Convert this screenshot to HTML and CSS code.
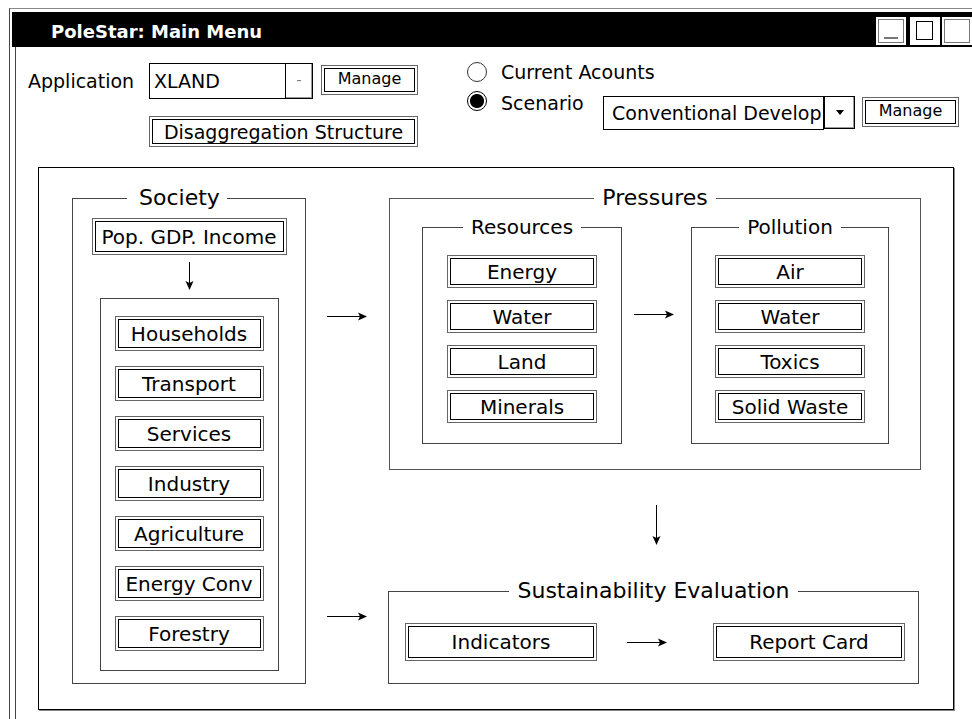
FILE: index.html
```html
<!DOCTYPE html>
<html lang="en">
<head>
  <meta charset="UTF-8" />
  <meta name="viewport" content="width=device-width, initial-scale=1.0"/>
  <title>PoleStar: Main Menu</title>
  <link rel="stylesheet" href="styles.css">
</head>
<body>
  <div class="window">
    <div class="titlebar">
      <span class="title">PoleStar: Main Menu</span>
      <div class="winbtns">
        <span class="winbtn win-min"><span class="winbtn-in"><span class="underscore"></span></span></span>
        <span class="winbtn win-max"><span class="winbtn-in"></span></span>
        <span class="winbtn win-close"><span class="winbtn-in"></span></span>
      </div>
    </div>

    <div class="main">
      <div class="toolbar">
        <div class="app">
          <div class="app-row">
            <span class="label">Application</span>
            <div class="combo app-combo">
              <span class="combo-text">XLAND</span>
              <span class="combo-btn dash">-</span>
            </div>
            <div class="btn manage"><span>Manage</span></div>
          </div>
          <div class="btn disagg"><span>Disaggregation Structure</span></div>
        </div>

        <div class="mode">
          <div class="radio-row">
            <span class="radio"></span>
            <span class="radio-label">Current Acounts</span>
          </div>
          <div class="radio-row scenario-row">
            <span class="radio checked"></span>
            <span class="radio-label scen-label">Scenario</span>
            <div class="combo scen-combo">
              <span class="combo-text">Conventional Develop</span>
            </div>
            <span class="drop-btn"></span>
            <div class="btn manage manage-scen"><span>Manage</span></div>
          </div>
        </div>
      </div>

      <div class="canvas">
        <fieldset class="group society">
          <legend>Society</legend>
          <div class="btn pop"><span>Pop. GDP. Income</span></div>
          <svg class="arrow-down small" width="9" height="28" viewBox="0 0 9 28">
            <path d="M4.5 0V21" stroke="#000" stroke-width="1"/>
            <path d="M0.5 19L4.5 28L8.5 19L4.5 21Z" fill="#000"/>
          </svg>
          <div class="sectors">
            <div class="btn sector"><span>Households</span></div>
            <div class="btn sector"><span>Transport</span></div>
            <div class="btn sector"><span>Services</span></div>
            <div class="btn sector"><span>Industry</span></div>
            <div class="btn sector"><span>Agriculture</span></div>
            <div class="btn sector"><span>Energy Conv</span></div>
            <div class="btn sector"><span>Forestry</span></div>
          </div>
        </fieldset>

        <div class="links">
          <svg class="arrow-right first" width="40" height="9" viewBox="0 0 40 9">
            <path d="M0 4.5H33" stroke="#000" stroke-width="1"/>
            <path d="M31 0.5L40 4.5L31 8.5L33 4.5Z" fill="#000"/>
          </svg>
          <svg class="arrow-right second" width="40" height="9" viewBox="0 0 40 9">
            <path d="M0 4.5H33" stroke="#000" stroke-width="1"/>
            <path d="M31 0.5L40 4.5L31 8.5L33 4.5Z" fill="#000"/>
          </svg>
        </div>

        <div class="flow">
          <fieldset class="group pressures">
            <legend>Pressures</legend>
            <div class="pressure-row">
              <fieldset class="group sub resources">
                <legend>Resources</legend>
                <div class="btn item"><span>Energy</span></div>
                <div class="btn item"><span>Water</span></div>
                <div class="btn item"><span>Land</span></div>
                <div class="btn item"><span>Minerals</span></div>
              </fieldset>
              <svg class="arrow-right mid" width="40" height="9" viewBox="0 0 40 9">
                <path d="M0 4.5H33" stroke="#000" stroke-width="1"/>
                <path d="M31 0.5L40 4.5L31 8.5L33 4.5Z" fill="#000"/>
              </svg>
              <fieldset class="group sub pollution">
                <legend>Pollution</legend>
                <div class="btn item"><span>Air</span></div>
                <div class="btn item"><span>Water</span></div>
                <div class="btn item"><span>Toxics</span></div>
                <div class="btn item"><span>Solid Waste</span></div>
              </fieldset>
            </div>
          </fieldset>

          <svg class="arrow-down big" width="9" height="40" viewBox="0 0 9 40">
            <path d="M4.5 0V33" stroke="#000" stroke-width="1"/>
            <path d="M0.5 31L4.5 40L8.5 31L4.5 33Z" fill="#000"/>
          </svg>

          <fieldset class="group sustain">
            <legend>Sustainability Evaluation</legend>
            <div class="sustain-row">
              <div class="btn eval"><span>Indicators</span></div>
              <svg class="arrow-right eval-arrow" width="40" height="9" viewBox="0 0 40 9">
                <path d="M0 4.5H33" stroke="#000" stroke-width="1"/>
                <path d="M31 0.5L40 4.5L31 8.5L33 4.5Z" fill="#000"/>
              </svg>
              <div class="btn eval report"><span>Report Card</span></div>
            </div>
          </fieldset>
        </div>
      </div>
    </div>
  </div>
</body>
</html>
```

FILE: styles.css
```css
body {
  margin: 0;
  font-family: "DejaVu Sans", sans-serif;
  color: #000;
  background: #fff;
  overflow: hidden;
}

/* window frame */
.window {
  box-sizing: border-box;
  height: calc(100vh - 8px);
  margin: 8px 0 0 9px;
  padding-top: 3px;
  border-top: 1px solid #888;
  border-left: 1px solid #444;
  display: flex;
  flex-direction: column;
}
.titlebar {
  display: flex;
  height: 35px;
  margin-left: 2px;
  background: #000;
}
.title {
  padding: 4px 0 0 39px;
  line-height: 31px;
  font-size: 18px;
  font-weight: bold;
  color: #fff;
}
.winbtns {
  display: flex;
  margin: 5px 0 0 auto;
}
.winbtn {
  box-sizing: border-box;
  width: 30px;
  height: 28px;
  padding: 2px;
  background: #fff;
}
.winbtn-in {
  box-sizing: border-box;
  display: flex;
  align-items: flex-end;
  justify-content: center;
  height: 100%;
  border: 1px solid #777;
}
.underscore {
  width: 14px;
  height: 2px;
  margin-bottom: 3px;
  background: #777;
}
.win-max {
  margin-left: 4px;
  padding: 4px 7px 5px 6px;
}
.win-max .winbtn-in {
  border-color: #000;
}
.win-close {
  margin-left: 2px;
}

.main {
  flex: 1;
  margin-left: 5px;
  border-left: 1px solid #444;
}

/* top controls */
.toolbar {
  display: flex;
  height: 120px;
}
.app {
  margin-left: 12px;
}
.app-row {
  display: flex;
  align-items: flex-start;
  margin-top: 16px;
}
.label {
  width: 121px;
  font-size: 19px;
  line-height: 36px;
}
.combo {
  box-sizing: border-box;
  display: flex;
  border: 1px solid #000;
  background: #fff;
  font-size: 19px;
}
.combo-text {
  flex: 1;
  overflow: hidden;
  white-space: nowrap;
  align-self: center;
  line-height: 22px;
}
.app-combo {
  width: 164px;
  height: 36px;
}
.app-combo .combo-text {
  padding-left: 4px;
}
.combo-btn {
  width: 26px;
  border-left: 1px solid #000;
  box-shadow: inset -1px -1px 0 #999;
  text-align: center;
}
.dash {
  color: #777;
  font-size: 14px;
  line-height: 32px;
}

.btn {
  box-sizing: border-box;
  padding: 2px;
  border: 1px solid #666;
  background: #fff;
  font-size: 20px;
}
.btn span {
  box-sizing: border-box;
  display: flex;
  align-items: center;
  justify-content: center;
  height: 100%;
  border: 1px solid #000;
  white-space: nowrap;
}
.manage {
  width: 97px;
  height: 30px;
  margin: 2px 0 0 8px;
  font-size: 16px;
}
.manage span {
  padding-bottom: 4px;
}
.disagg {
  width: 269px;
  height: 31px;
  margin: 17px 0 0 121px;
  font-size: 19px;
}

.mode {
  margin-left: 49px;
}
.radio-row {
  display: flex;
  align-items: center;
  height: 22px;
  margin-top: 14px;
}
.radio {
  box-sizing: border-box;
  width: 20px;
  height: 20px;
  border: 1px solid #333;
  border-radius: 50%;
}
.radio.checked {
  border-color: #000;
  background: radial-gradient(circle, #000 0 6.5px, #fff 7.5px);
}
.radio-label {
  margin-left: 14px;
  font-size: 19px;
  line-height: 22px;
}
.scenario-row {
  align-items: flex-start;
  height: auto;
  margin-top: 8px;
}
.scen-label {
  width: 102px;
  margin-top: 1px;
}
.scen-combo {
  width: 221px;
  height: 34px;
  margin-top: 5px;
}
.scen-combo .combo-text {
  padding-left: 8px;
}
.drop-btn {
  box-sizing: border-box;
  display: flex;
  align-items: center;
  justify-content: center;
  width: 31px;
  height: 33px;
  margin-top: 5px;
  border: 1px solid #000;
  box-shadow: inset -1px -1px 0 #999;
}
.drop-btn::after {
  content: "";
  border-left: 4px solid transparent;
  border-right: 4px solid transparent;
  border-top: 5px solid #000;
}
.manage-scen {
  margin: 6px 0 0 7px;
}

/* diagram canvas */
.canvas {
  box-sizing: border-box;
  display: grid;
  grid-template-columns: 234px 82px 533px;
  align-items: start;
  width: 916px;
  height: 543px;
  margin-left: 22px;
  padding: 17px 0 0 33px;
  border: 1px solid #000;
  box-shadow: 1px 1px 0 #888;
}
.group {
  box-sizing: border-box;
  min-width: 0;
  margin: 0;
  padding: 0;
  border: 1px solid #444;
}
.group > legend {
  margin: 0 auto;
  padding: 0 8px;
  font-size: 22px;
  line-height: 26px;
}
.group.sub > legend {
  font-size: 20px;
  line-height: 22px;
}
svg {
  display: block;
}

.society {
  width: 234px;
  height: 499px;
  padding-top: 7px;
}
.society > legend {
  margin: 0 0 0 54px;
  padding: 0 7px 0 12px;
}
.pop {
  width: 195px;
  height: 37px;
  margin: 0 auto;
}
.arrow-down.small {
  margin: 7px auto 0;
}
.sectors {
  box-sizing: border-box;
  width: 179px;
  height: 373px;
  margin: 8px auto 0;
  padding-top: 17px;
  border: 1px solid #444;
}
.sector {
  width: 149px;
  height: 35px;
  margin: 0 auto 15px;
}

.links {
  display: flex;
  flex-direction: column;
  align-items: center;
}
.arrow-right.first {
  margin-top: 127px;
}
.arrow-right.second {
  margin-top: 291px;
}

.flow {
  display: flex;
  flex-direction: column;
}
.pressures {
  width: 532px;
  height: 285px;
  margin-left: 1px;
  border-color: #555;
}
.pressure-row {
  display: flex;
  align-items: flex-start;
  padding: 5px 0 0 32px;
}
.resources,
.pollution {
  height: 228px;
  padding-top: 17px;
}
.resources {
  width: 200px;
}
.pollution {
  width: 198px;
  margin-left: 17px;
}
.item {
  width: 150px;
  height: 33px;
  margin: 0 auto 12px;
}
.arrow-right.mid {
  margin: 94px 0 0 12px;
}
.arrow-down.big {
  margin: 35px 0 0 264px;
}
.sustain {
  width: 531px;
  height: 106px;
  margin-top: 33px;
  padding-top: 19px;
}
.sustain-row {
  display: flex;
  align-items: center;
  padding-left: 16px;
}
.eval {
  width: 192px;
  height: 38px;
}
.eval-arrow {
  margin-left: 30px;
}
.report {
  margin-left: 46px;
}
```
